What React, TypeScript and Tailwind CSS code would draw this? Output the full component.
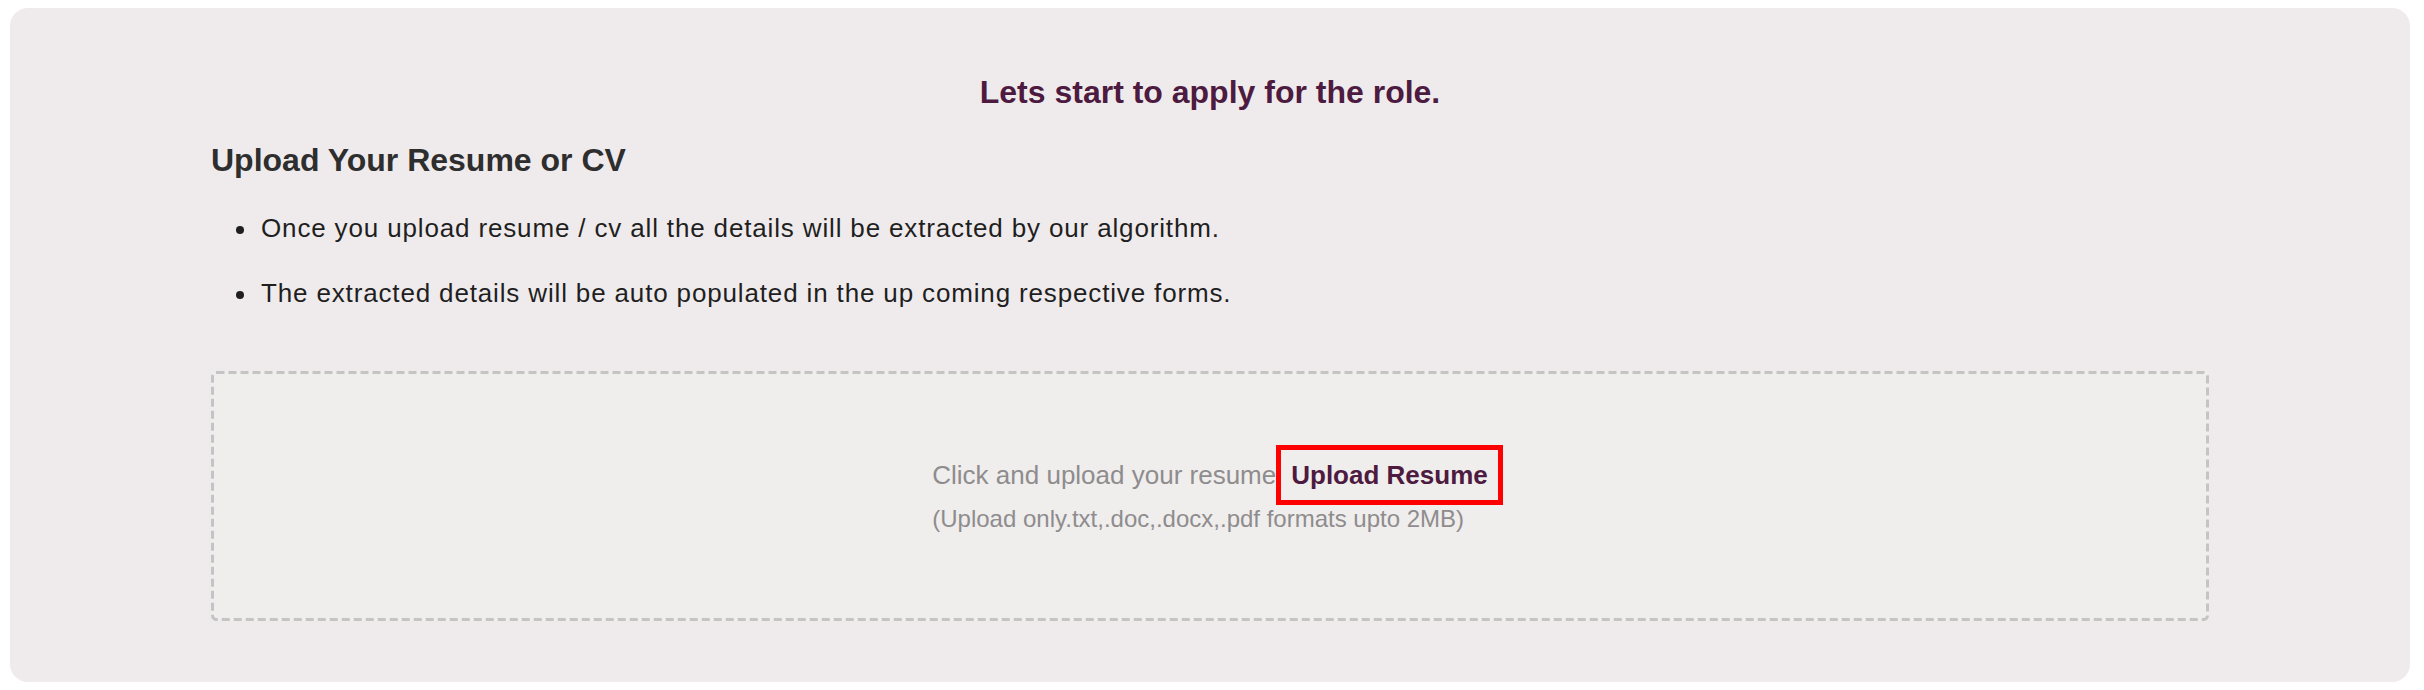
const points = [
  "Once you upload resume / cv all the details will be extracted by our algorithm.",
  "The extracted details will be auto populated in the up coming respective forms.",
];

const App = () => {
  return (
    <div
      className="min-h-screen bg-white pt-2 pb-2 pl-[10px] pr-[14px]"
      style={{ fontFamily: '"Liberation Sans", Arial, Helvetica, sans-serif' }}
    >
      <div className="rounded-[18px] bg-[#efebec] px-[201px] pt-[68px] pb-[61px]">
        <h1 className="text-center text-[32px] leading-[32px] font-bold text-[#4d1a40]">
          Lets start to apply for the role.
        </h1>
        <h2 className="mt-[36px] text-[32px] leading-[32px] font-bold text-[#2e2e2e]">
          Upload Your Resume or CV
        </h2>
        <ul className="mt-[39px] flex flex-col gap-[39px] pl-[25px]">
          {points.map((p) => (
            <li
              key={p}
              className="flex items-center gap-[17px] text-[26px] leading-[26px] tracking-[0.85px] text-[#1f1f1f]"
            >
              <span className="mt-[3px] h-2 w-2 shrink-0 rounded-full bg-[#1f1f1f]" />
              {p}
            </li>
          ))}
        </ul>
        <div className="relative mt-[65px] h-[250px] rounded-[4px] bg-[#f0eded] pt-[74px]">
          <svg className="pointer-events-none absolute inset-0 h-full w-full">
            <rect
              x={1.5}
              y={1.5}
              width={1995}
              height={247}
              rx={4}
              fill="none"
              stroke="#c5c3c4"
              strokeWidth={3}
              strokeDasharray="8 4"
            />
          </svg>
          <div className="flex justify-center pl-[15px]">
            <div className="flex flex-col items-start">
              <div className="flex items-center">
                <span className="text-[26px] leading-[26px] text-[#8e8c8d]">Click and upload your resume</span>
                <button
                  type="button"
                  className="h-[60px] border-[5px] border-[#ff0000] px-[10px] text-[26px] leading-[26px] font-bold text-[#4d1a40]"
                >
                  Upload Resume
                </button>
              </div>
              <p className="mt-[2px] text-[24px] leading-[24px] text-[#8e8c8d]">
                (Upload only.txt,.doc,.docx,.pdf formats upto 2MB)
              </p>
            </div>
          </div>
        </div>
      </div>
    </div>
  );
};

export default App;
